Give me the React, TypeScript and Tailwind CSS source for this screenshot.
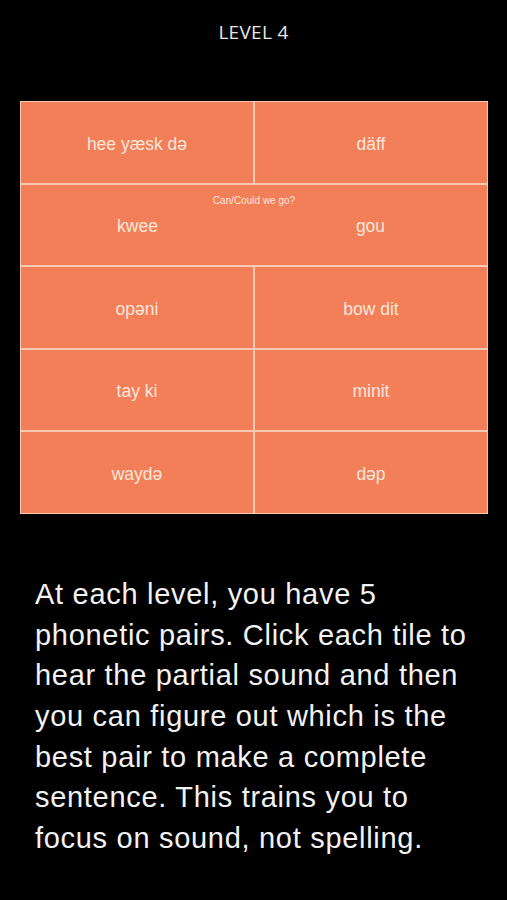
import React from "react";

const Cell = ({ children }: { children: React.ReactNode }) => (
  <div className="flex items-center justify-center pt-[3px] border border-[#f8c9b3] text-[17.5px] text-[#fbe6dc]">
    {children}
  </div>
);

export default function App() {
  const rows: [string, string][] = [
    ["hee yæsk də", "däff"],
    ["", ""],
    ["opəni", "bow dit"],
    ["tay ki", "minit"],
    ["waydə", "dəp"],
  ];
  const lines = [
    "At each level, you have 5",
    "phonetic pairs. Click each tile to",
    "hear the partial sound and then",
    "you can figure out which is the",
    "best pair to make a complete",
    "sentence. This trains you to",
    "focus on sound, not spelling.",
  ];
  return (
    <div className="w-[507px] h-[900px] bg-black overflow-hidden flex flex-col" style={{ fontFamily: "'Liberation Sans', Arial, sans-serif" }}>
      <div className="h-[101px] pt-[18px] flex justify-center">
        <div className="text-[19px] text-[#e8e8e8] tracking-[0.3px]" style={{ fontFamily: "'Open Sans', sans-serif" }}>LEVEL 4</div>
      </div>
      <div className="mx-[20px] w-[468px] bg-[#f27f58] flex flex-col">
        {rows.map((r, i) =>
          i === 1 ? (
            <div key={i} className="h-[82.6px] border border-[#f8c9b3] relative flex pt-[3px]">
              <div className="absolute top-[8px] left-0 right-0 text-center text-[10px] text-[#fbe6dc]">Can/Could we go?</div>
              <div className="flex-1 flex items-center justify-center text-[17.5px] text-[#fbe6dc]">kwee</div>
              <div className="flex-1 flex items-center justify-center text-[17.5px] text-[#fbe6dc]">gou</div>
            </div>
          ) : (
            <div key={i} className="h-[82.6px] grid grid-cols-2">
              <Cell>{r[0]}</Cell>
              <Cell>{r[1]}</Cell>
            </div>
          )
        )}
      </div>
      <div
        className="mt-[60px] px-[35px] text-[29px] leading-[40.7px] tracking-[0.7px] text-[#f2f2f2] whitespace-nowrap"
        style={{ fontFamily: "'Liberation Sans', Arial, sans-serif" }}
      >
        {lines.map((l, i) => (
          <div key={i}>{l}</div>
        ))}
      </div>
    </div>
  );
}
